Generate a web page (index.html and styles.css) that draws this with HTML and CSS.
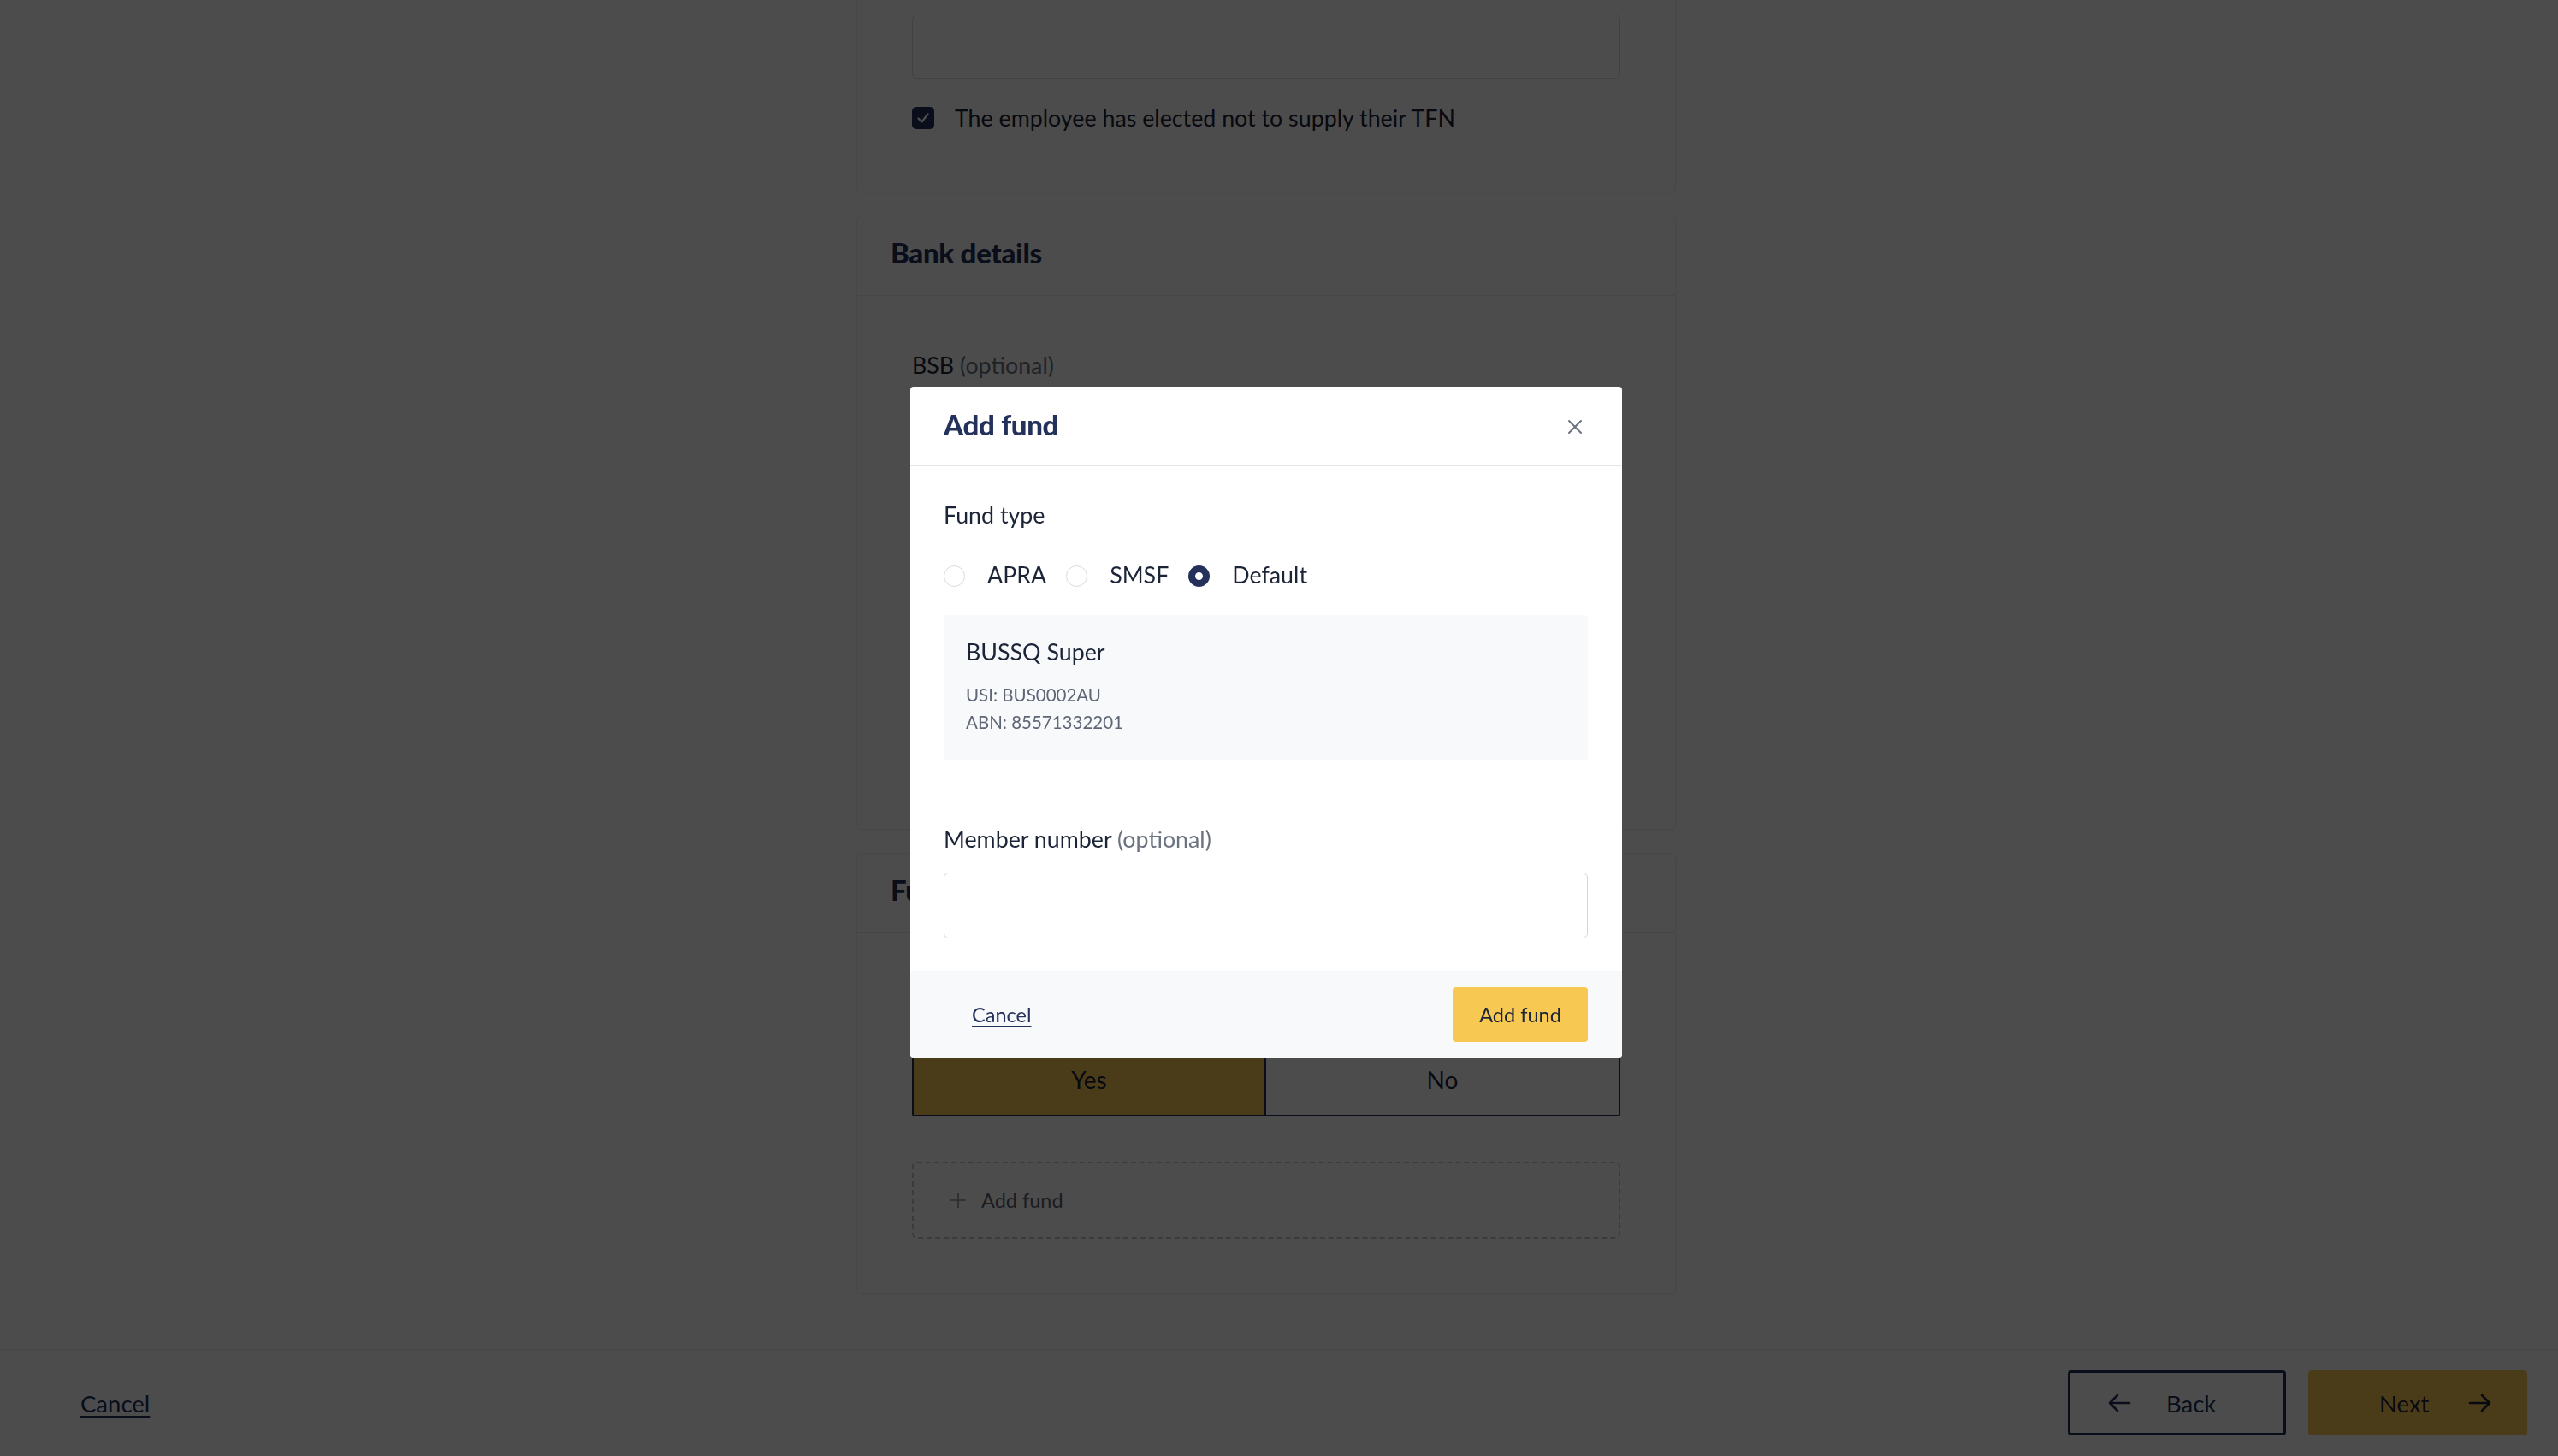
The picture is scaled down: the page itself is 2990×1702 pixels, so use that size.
FILE: index.html
```html
<!DOCTYPE html>
<html lang="en">
<head>
<meta charset="utf-8">
<title>Add fund</title>
<link rel="stylesheet" href="styles.css">
</head>
<body>
<div class="app">
  <main class="scroller">
    <div class="column">
      <section class="card card-tfn">
        <div class="input"></div>
        <label class="check-row">
          <span class="checkbox">
            <svg viewBox="0 0 26 26" width="26" height="26"><polyline points="7.5,13.5 11.5,17.5 18.5,8.5" fill="none" stroke="#ffffff" stroke-width="2.4" stroke-linecap="round" stroke-linejoin="round"/></svg>
          </span>
          <span>The employee has elected not to supply their TFN</span>
        </label>
      </section>

      <section class="card">
        <header class="card-head"><h2>Bank details</h2></header>
        <div class="card-body">
          <div class="field-label">BSB <span class="opt">(optional)</span></div>
          <div class="input"></div>
          <div class="input spaced"></div>
          <div class="input spaced"></div>
        </div>
      </section>

      <section class="card">
        <header class="card-head"><h2>Funds</h2></header>
        <div class="card-body funds-body">
          <div class="toggle">
            <div class="toggle-opt on">Yes</div>
            <div class="toggle-opt">No</div>
          </div>
          <div class="dashed">
            <svg viewBox="0 0 20 20" width="20" height="20"><path d="M10 1v18M1 10h18" stroke="#8a8f99" stroke-width="1.6" fill="none"/></svg>
            <span>Add fund</span>
          </div>
        </div>
      </section>
    </div>
  </main>

  <footer class="footer">
    <a class="footer-cancel" href="#">Cancel</a>
    <div class="footer-actions">
      <button class="btn-back" type="button">
        <svg viewBox="0 0 28 24" width="28" height="24"><path d="M26 12H3M12 3l-9 9 9 9" fill="none" stroke="#24315a" stroke-width="2.6" stroke-linecap="round" stroke-linejoin="round"/></svg>
        <span>Back</span>
      </button>
      <button class="btn-next" type="button">
        <span>Next</span>
        <svg viewBox="0 0 28 24" width="28" height="24"><path d="M2 12h23M16 3l9 9-9 9" fill="none" stroke="#1c2438" stroke-width="2.6" stroke-linecap="round" stroke-linejoin="round"/></svg>
      </button>
    </div>
  </footer>
</div>

<div class="overlay">
  <div class="modal">
    <div class="modal-head">
      <h1>Add fund</h1>
      <svg class="close" viewBox="0 0 18 18" width="18" height="18"><path d="M2 2l14 14M16 2L2 16" stroke="#6b7280" stroke-width="2" stroke-linecap="round"/></svg>
    </div>
    <div class="modal-body">
      <div class="m-label">Fund type</div>
      <div class="radios">
        <span class="radio"></span><span class="radio-text">APRA</span>
        <span class="radio"></span><span class="radio-text">SMSF</span>
        <span class="radio checked"></span><span class="radio-text">Default</span>
      </div>
      <div class="fund-box">
        <div class="fund-name">BUSSQ Super</div>
        <div class="fund-meta">USI: BUS0002AU</div>
        <div class="fund-meta">ABN: 85571332201</div>
      </div>
      <div class="m-label member">Member number <span class="opt">(optional)</span></div>
      <div class="m-input"></div>
    </div>
    <div class="modal-foot">
      <a class="m-cancel" href="#">Cancel</a>
      <button class="m-add" type="button">Add fund</button>
    </div>
  </div>
</div>
</body>
</html>
```

FILE: styles.css
```css
* { box-sizing: border-box; }
html, body { margin: 0; padding: 0; }
body {
  font-family: "Lato", "Noto Sans", sans-serif;
  color: #1c2438;
  background: #ffffff;
  width: 2990px;
  height: 1702px;
  overflow: hidden;
}
.app {
  display: flex;
  flex-direction: column;
  height: 1702px;
}
.scroller {
  flex: 1;
  overflow: hidden;
  padding-right: 30px;
}
.column {
  width: 958px;
  margin: -81px auto 0;
  display: flex;
  flex-direction: column;
  gap: 27px;
}
.card {
  background: #ffffff;
  border: 1px solid #eceef1;
  border-radius: 6px;
  box-shadow: 0 1px 3px rgba(0,0,0,0.05);
}
.card-tfn { padding: 97px 64px 73px; }
.field-label {
  font-size: 26.8px;
  line-height: 36px;
  color: #1c2438;
  margin-bottom: 21px;
}
.opt { color: #6b7280; }
.input {
  height: 75px;
  border: 1px solid #d6d9df;
  border-radius: 6px;
  background: #ffffff;
}
.card-body .input { height: 77px; }
.card-body .input.spaced { margin-top: 97px; }
.check-row {
  display: flex;
  align-items: center;
  gap: 24px;
  margin-top: 33px;
  font-size: 26.8px;
  line-height: 26px;
  color: #1c2438;
}
.checkbox {
  width: 26px;
  height: 26px;
  border-radius: 5px;
  background: #24315a;
  display: flex;
}
.card-head {
  height: 93px;
  border-bottom: 1px solid #e8eaee;
  display: flex;
  align-items: center;
  padding: 0 39px 8px;
}
.card-head h2 {
  margin: 0;
  font-size: 33px;
  font-weight: 900;
  color: #24315a;
  letter-spacing: -0.3px;
}
.card-body { padding: 63px 64px 78px; }
.funds-body { padding: 130px 64px 64px; }
.toggle {
  display: grid;
  grid-template-columns: 1fr 1fr;
  height: 84px;
  border: 2px solid #24315a;
  border-radius: 3px;
}
.toggle-opt {
  display: flex;
  align-items: center;
  justify-content: center;
  font-size: 28px;
  color: #1c2438;
  background: #ffffff;
  padding-bottom: 3px;
}
.toggle-opt.on { background: #f7c952; border-right: 2px solid #24315a; }
.dashed {
  margin-top: 53px;
  height: 90px;
  border: 2px dashed #c4c7cc;
  border-radius: 6px;
  display: flex;
  align-items: center;
  gap: 17px;
  padding-left: 42px;
  font-size: 23.5px;
  color: #5b6170;
}

.footer {
  height: 125px;
  flex: none;
  border-top: 1px solid #e8eaee;
  background: #ffffff;
  display: flex;
  align-items: center;
  justify-content: space-between;
  padding: 0 36px 0 94px;
}
.footer-cancel {
  font-size: 27.5px;
  color: #24315a;
  text-decoration: underline;
  text-underline-offset: 4px;
}
.footer-actions { display: flex; gap: 26px; }
.btn-back, .btn-next {
  font-family: inherit;
  font-size: 27.5px;
  height: 76px;
  border-radius: 4px;
  display: flex;
  align-items: center;
  cursor: pointer;
}
.btn-back {
  width: 255px;
  background: #ffffff;
  border: 3px solid #24315a;
  color: #24315a;
  padding: 0 0 0 43px;
  gap: 41px;
}
.btn-next {
  width: 256px;
  background: #f7c952;
  border: none;
  color: #1c2438;
  padding: 0 0 0 83px;
  gap: 46px;
}

.overlay {
  position: fixed;
  inset: 0;
  background: rgba(0,0,0,0.7);
  display: flex;
  justify-content: center;
  align-items: flex-start;
  padding: 452px 30px 0 0;
}
.modal {
  width: 832px;
  background: #ffffff;
  border-radius: 4px;
  overflow: hidden;
}
.modal-head {
  height: 93px;
  border-bottom: 1px solid #e5e7eb;
  display: flex;
  align-items: center;
  justify-content: space-between;
  padding: 0 46px 4px 39px;
}
.modal-head h1 {
  margin: 0;
  font-size: 33px;
  font-weight: 900;
  color: #24315a;
  letter-spacing: -0.3px;
}
.close { margin-top: 6px; }
.modal-body { padding: 39px 40px 38px 39px; }
.m-label {
  font-size: 26.8px;
  line-height: 36px;
  color: #1c2438;
}
.radios {
  display: flex;
  align-items: center;
  height: 36px;
  margin-top: 34px;
  font-size: 26.8px;
  color: #1c2438;
}
.radio {
  width: 25px;
  height: 25px;
  border-radius: 50%;
  border: 1px solid #d7dae0;
  background: #ffffff;
  margin-right: 26px;
  margin-top: 2px;
}
.radio.checked {
  border: 8px solid #24315a;
}
.radio-text { margin-right: 23px; }
.fund-box {
  margin-top: 29px;
  background: #f8f9fb;
  border-radius: 4px;
  padding: 25px 26px 28px;
}
.fund-name {
  font-size: 26.8px;
  line-height: 36px;
  color: #1c2438;
  margin-bottom: 16px;
}
.fund-meta {
  font-size: 20.5px;
  line-height: 32px;
  color: #5f6675;
}
.m-label.member { margin-top: 75px; margin-bottom: 21px; }
.m-input {
  height: 77px;
  border: 1px solid #d3d6de;
  border-radius: 6px;
}
.modal-foot {
  height: 102px;
  background: #f8f9fb;
  display: flex;
  align-items: center;
  justify-content: space-between;
  padding: 0 40px 0 72px;
}
.m-cancel {
  font-size: 23.5px;
  color: #24315a;
  text-decoration: underline;
  text-underline-offset: 4px;
}
.m-add {
  width: 158px;
  height: 64px;
  border: none;
  border-radius: 4px;
  background: #f7c952;
  font-family: inherit;
  font-size: 23.5px;
  color: #1c2438;
}
```
